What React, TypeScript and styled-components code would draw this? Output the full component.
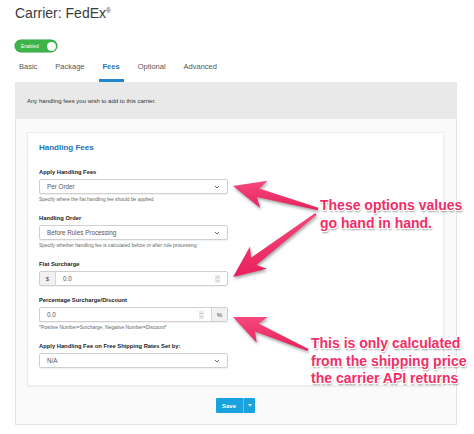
import React from "react";
import styled, { createGlobalStyle } from "styled-components";

const Global = createGlobalStyle`
  html, body { margin: 0; padding: 0; background: #fff; }
  body { font-family: "Liberation Sans", Arial, sans-serif; width: 474px; height: 434px; overflow: hidden; }
  * { box-sizing: border-box; }
`;

const Page = styled.div`
  position: relative;
  width: 474px;
  height: 434px;
  padding: 5px 17px 0 15px;
`;

const Title = styled.h1`
  margin: 0;
  font-size: 14px;
  line-height: 17px;
  font-weight: 400;
  color: #3b3b3b;
  sup { font-size: 6.5px; vertical-align: 5px; line-height: 0; }
`;

const Toggle = styled.div`
  margin-top: 18px;
  width: 42px;
  height: 12px;
  border-radius: 6px;
  background: #3db449;
  display: flex;
  align-items: center;
  justify-content: space-between;
  padding: 0 1.5px 0 6px;
  color: #fff;
  font-size: 4.8px;
  box-shadow: 0 0 0 0.5px #2f9a3a;
`;

const Knob = styled.span`
  width: 9px;
  height: 9px;
  border-radius: 50%;
  background: #fff;
`;

const Tabs = styled.div`
  display: flex;
  gap: 10px;
  margin-top: 5.5px;
`;

const Tab = styled.div<{ $active?: boolean }>`
  padding: 4px 4px 7px;
  line-height: 10px;
  font-size: 7.5px;
  color: ${(p) => (p.$active ? "#1b77c0" : "#555")};
  font-weight: ${(p) => (p.$active ? 700 : 400)};
  border-bottom: 3px solid ${(p) => (p.$active ? "#1d86cf" : "transparent")};
`;

const Intro = styled.div`
  height: 37px;
  background: #e9e9e9;
  display: flex;
  align-items: center;
  padding: 1px 12px 0;
  font-size: 6px;
  color: #333;
`;

const Body = styled.div`
  background: #fafafa;
  border: 1px solid #e4e4e4;
  border-top: none;
  padding: 13px 12px 11px 11px;
`;

const Card = styled.div`
  background: #fff;
  border: 1px solid #ececec;
  box-shadow: 0 1px 2px rgba(0, 0, 0, 0.05);
  padding: 9px 12px 7px 11px;
`;

const Heading = styled.h2`
  margin: 0 0 14.5px;
  font-size: 8px;
  line-height: 12px;
  font-weight: 700;
  color: #1a72b6;
`;

const Field = styled.div`
  width: 189px;
  margin-bottom: 10px;
`;

const Label = styled.div`
  font-size: 5.8px;
  line-height: 8px;
  font-weight: 700;
  color: #222;
  margin-bottom: 3px;
`;

const Help = styled.div`
  margin-top: 2px;
  font-size: 4.9px;
  line-height: 8px;
  color: #666;
`;

const Box = styled.div`
  height: 15px;
  border: 1px solid #cfcfcf;
  border-radius: 2px;
  background: #fff;
  box-shadow: 0 1px 1px rgba(0, 0, 0, 0.06);
  display: flex;
  align-items: stretch;
  font-size: 6.3px;
  color: #555;
  overflow: hidden;
`;

const Value = styled.div`
  flex: 1;
  display: flex;
  align-items: center;
  justify-content: space-between;
  padding: 0 7px;
`;

const Addon = styled.div<{ $side: "left" | "right" }>`
  width: 16px;
  display: flex;
  align-items: center;
  justify-content: center;
  background: #f1f1f1;
  color: #444;
  font-size: 6px;
  ${(p) => (p.$side === "left" ? "border-right: 1px solid #d6d6d6;" : "border-left: 1px solid #d6d6d6;")}
`;

const Actions = styled.div`
  display: flex;
  justify-content: center;
  margin-top: 12px;
`;

const SaveBtn = styled.div`
  height: 15px;
  display: flex;
  border-radius: 1px;
  background: #19a2de;
  color: #fff;
  font-size: 6px;
  font-weight: 700;
  overflow: hidden;
`;

const SaveLabel = styled.span`
  display: flex;
  align-items: center;
  padding: 0 7px 0 6px;
`;

const Caret = styled.span`
  width: 12px;
  display: flex;
  align-items: center;
  justify-content: center;
  border-left: 1px solid rgba(255, 255, 255, 0.35);
`;

const Overlay = styled.svg`
  position: absolute;
  left: 0;
  top: 0;
  pointer-events: none;
  filter: drop-shadow(1px 2px 1.5px rgba(0, 0, 0, 0.35));
`;

const Note = styled.div<{ $x: number; $y: number; $lh: number }>`
  position: absolute;
  left: ${(p) => p.$x}px;
  top: ${(p) => p.$y}px;
  font-size: 14px;
  line-height: ${(p) => p.$lh}px;
  font-weight: 700;
  color: #ef2f68;
  white-space: nowrap;
  text-shadow: 1px 0 0 #fff, -1px 0 0 #fff, 0 1px 0 #fff, 0 -1px 0 #fff,
    1px 1px 0 #fff, -1px -1px 0 #fff, 1px -1px 0 #fff, -1px 1px 0 #fff,
    1px 2px 2px rgba(0, 0, 0, 0.45);
`;

const Chevron = () => (
  <svg width="6" height="4" viewBox="0 0 6 4">
    <path d="M1 1l2 2 2-2" fill="none" stroke="#555" strokeWidth="0.9" />
  </svg>
);

const Spinner = () => (
  <svg width="5" height="8" viewBox="0 0 5 8">
    <rect x="0.25" y="0.25" width="4.5" height="7.5" rx="1" fill="#f3f3f3" stroke="#cfcfcf" strokeWidth="0.5" />
    <path d="M1.3 3l1.2-1.2L3.7 3M1.3 5l1.2 1.2L3.7 5" fill="none" stroke="#888" strokeWidth="0.6" />
  </svg>
);

type Pt = [number, number];

function arrowPoints(tail: Pt, tip: Pt, headLen: number, headW: number, shaftW: number, tailW: number, back: number) {
  const dx = tip[0] - tail[0];
  const dy = tip[1] - tail[1];
  const len = Math.hypot(dx, dy);
  const ux = dx / len;
  const uy = dy / len;
  const nx = -uy;
  const ny = ux;
  const bx = tip[0] - ux * headLen;
  const by = tip[1] - uy * headLen;
  const cx = bx - ux * back;
  const cy = by - uy * back;
  const pts: Pt[] = [
    [tail[0] + nx * tailW, tail[1] + ny * tailW],
    [bx + nx * shaftW, by + ny * shaftW],
    [cx + nx * headW, cy + ny * headW],
    tip,
    [cx - nx * headW, cy - ny * headW],
    [bx - nx * shaftW, by - ny * shaftW],
    [tail[0] - nx * tailW, tail[1] - ny * tailW],
  ];
  return pts.map((p) => `${p[0].toFixed(1)},${p[1].toFixed(1)}`).join(" ");
}

const arrows: { tail: Pt; tip: Pt }[] = [
  { tail: [318, 209], tip: [233, 186] },
  { tail: [316, 214], tip: [233, 277] },
  { tail: [308, 350], tip: [233, 317] },
];

export default function App() {
  return (
    <>
      <Global />
      <Page>
        <Title>
          Carrier: FedEx<sup>®</sup>
        </Title>
        <Toggle>
          <span>Enabled</span>
          <Knob />
        </Toggle>
        <Tabs>
          <Tab>Basic</Tab>
          <Tab>Package</Tab>
          <Tab $active>Fees</Tab>
          <Tab>Optional</Tab>
          <Tab>Advanced</Tab>
        </Tabs>
        <Intro>Any handling fees you wish to add to this carrier.</Intro>
        <Body>
          <Card>
            <Heading>Handling Fees</Heading>
            <Field>
              <Label>Apply Handling Fees</Label>
              <Box>
                <Value>
                  Per Order <Chevron />
                </Value>
              </Box>
              <Help>Specify where the flat handling fee should be applied</Help>
            </Field>
            <Field>
              <Label>Handling Order</Label>
              <Box>
                <Value>
                  Before Rules Processing <Chevron />
                </Value>
              </Box>
              <Help>Specify whether handling fee is calculated before or after rule processing</Help>
            </Field>
            <Field>
              <Label>Flat Surcharge</Label>
              <Box>
                <Addon $side="left">$</Addon>
                <Value>
                  0.0 <Spinner />
                </Value>
              </Box>
            </Field>
            <Field>
              <Label>Percentage Surcharge/Discount</Label>
              <Box>
                <Value>
                  0.0 <Spinner />
                </Value>
                <Addon $side="right">%</Addon>
              </Box>
              <Help>*Positive Number=Surcharge, Negative Number=Discount*</Help>
            </Field>
            <Field>
              <Label>Apply Handling Fee on Free Shipping Rates Set by:</Label>
              <Box>
                <Value>
                  N/A <Chevron />
                </Value>
              </Box>
            </Field>
          </Card>
          <Actions>
            <SaveBtn>
              <SaveLabel>Save</SaveLabel>
              <Caret>
                <svg width="4" height="3" viewBox="0 0 4 3">
                  <path d="M0 0h4L2 2.5z" fill="#fff" />
                </svg>
              </Caret>
            </SaveBtn>
          </Actions>
        </Body>

        <Overlay width="474" height="434" viewBox="0 0 474 434">
          <defs>
            <linearGradient id="pink" x1="0" y1="0" x2="0" y2="1">
              <stop offset="0" stopColor="#f5487c" />
              <stop offset="1" stopColor="#e8215c" />
            </linearGradient>
          </defs>
          {arrows.map((a, i) => (
            <polygon
              key={i}
              points={arrowPoints(a.tail, a.tip, 26, 14, 4.5, 1.2, 6)}
              fill="url(#pink)"
            />
          ))}
        </Overlay>
        <Note $x={320} $y={196} $lh={18}>
          These options values
          <br />
          go hand in hand.
        </Note>
        <Note $x={311} $y={335} $lh={17.5}>
          This is only calculated
          <br />
          from the shipping price
          <br />
          the carrier API returns
        </Note>
      </Page>
    </>
  );
}
